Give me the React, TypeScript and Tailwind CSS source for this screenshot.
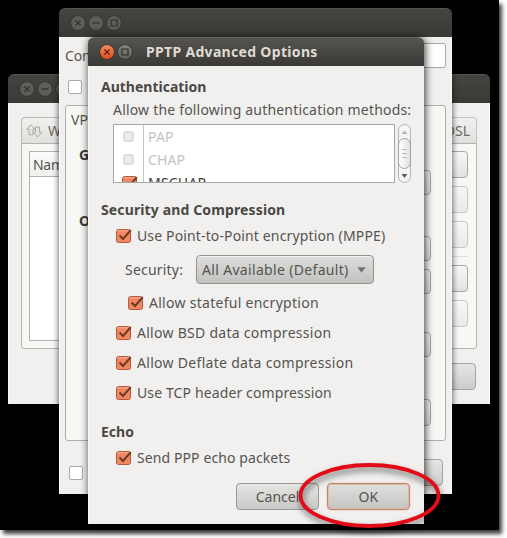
import type { ReactNode } from "react";

function WindowButton({ kind, active = false }: { kind: "close" | "min" | "max"; active?: boolean }) {
  return (
    <svg width="16" height="16" viewBox="0 0 16 16" className="shrink-0">
      <defs>
        <linearGradient id="orb-on" x1="0" y1="0" x2="0" y2="1">
          <stop offset="0" stopColor="#f58a63" />
          <stop offset="1" stopColor="#dd4b1c" />
        </linearGradient>
        <linearGradient id="orb-off" x1="0" y1="0" x2="0" y2="1">
          <stop offset="0" stopColor="#85847d" />
          <stop offset="1" stopColor="#605f5a" />
        </linearGradient>
      </defs>
      <circle
        cx="8"
        cy="8"
        r="7.4"
        fill={kind === "close" && active ? "url(#orb-on)" : active ? "url(#orb-off)" : "#5e5d58"}
        stroke="#2f2e2a"
        strokeWidth="0.8"
      />
      <g fill="none" stroke={kind === "close" && active ? "#4a1c0a" : "#30302c"} strokeWidth="1.2">
        {kind === "close" && <path d="M5.3 5.3l5.4 5.4M10.7 5.3l-5.4 5.4" />}
        {kind === "min" && <path d="M4.5 8h7" />}
        {kind === "max" && <path d="M5 5h6v6H5z" />}
      </g>
    </svg>
  );
}

function TitleBar({ active = false, children }: { active?: boolean; children?: ReactNode }) {
  return (
    <div
      className={`flex h-[29px] shrink-0 items-center gap-[2px] rounded-t-[6px] border-t bg-linear-to-b to-[#3a3935] pl-[11px] ${
        active ? "border-[#65645f] from-[#55544f]" : "border-[#55544f] from-[#454440]"
      }`}
    >
      <WindowButton kind="close" active={active} />
      {!active && <WindowButton kind="min" />}
      <WindowButton kind="max" active={active} />
      {children}
    </div>
  );
}

function Tick({ on = true }: { on?: boolean }) {
  return on ? (
    <svg width="16" height="16" viewBox="0 0 16 16" className="shrink-0">
      <rect x="0.5" y="1.5" width="14" height="13" rx="2" fill="#f08763" stroke="#b35b3e" />
      <path d="M1.5 2.8h12" stroke="#f8ae94" />
      <path d="M3.5 7.5L7 11L14.8 2.2" fill="none" stroke="#6b3722" strokeWidth="1.9" />
    </svg>
  ) : (
    <div className="size-[14px] shrink-0 rounded-[2px] border border-[#aaa9a6] bg-white" />
  );
}

function CheckRow({ children, indent = false }: { children: ReactNode; indent?: boolean }) {
  return (
    <div className={`flex h-[30px] items-center gap-[5px] whitespace-nowrap ${indent ? "pl-[40px]" : "pl-[28px]"}`}>
      <Tick />
      {children}
    </div>
  );
}

function SideButton({ className }: { className: string }) {
  return <div className={`rounded-[4px] border border-[#a9a8a5] bg-linear-to-b from-[#f8f8f7] to-[#e2e2e1] ${className}`} />;
}

function ConnectionsWindow() {
  return (
    <div className="absolute left-[8px] top-[74px] flex h-[330px] w-[482px] flex-col">
      <TitleBar />
      <div className="flex flex-1 flex-col border-x border-[#fafafa] bg-[#f1f0ef] pt-[14px]">
        <div className="mx-[12px] flex h-[26px] justify-between">
          <div className="flex w-[90px] items-center gap-[5px] rounded-t-[4px] border border-b-0 border-[#bbb9b5] bg-linear-to-b from-[#f1f0ef] to-[#e1e0de] pl-[4px] text-[#6b6a66]">
            <svg width="17" height="14" viewBox="0 0 17 14" fill="#e5e4df" stroke="#aaa9a1" strokeWidth="1">
              <path d="M5 .8L.8 5.2H3v5.6h4V5.2h2.2z" />
              <path d="M9.5 3h4v5.3h2.2L11.5 13L7.3 8.3h2.2z" />
            </svg>
            <span>Wired</span>
          </div>
          <div className="flex w-[65px] items-center justify-end rounded-tr-[4px] border border-b-0 border-[#c5c3bf] bg-linear-to-b from-[#f1f0ef] to-[#e1e0de] pr-[6px] text-[#6b6a66]">
            DSL
          </div>
        </div>
        <div className="mx-[12px] flex h-[206px] justify-between rounded-b-[3px] border border-[#b5b3af] bg-[#f7f7f6] pb-[7px] pl-[7px] pr-[8px] pt-[7px]">
          <div className="w-[320px] border border-[#b4b2ae] bg-white">
            <div className="h-[25px] border-b border-[#b4b2ae] bg-linear-to-b from-[#fbfbfa] to-[#f0f0ef] pl-[3px] leading-[26px] tracking-[-0.3px]">Name</div>
          </div>
          <div className="flex w-[90px] flex-col gap-[8px]">
            <SideButton className="h-[27px]" />
            <SideButton className="h-[27px] opacity-60" />
            <SideButton className="h-[27px] opacity-60" />
            <div className="h-px bg-[#dddcda]" />
            <SideButton className="h-[27px]" />
            <SideButton className="h-[27px] opacity-60" />
          </div>
        </div>
        <div className="mr-[13px] mt-[14px] flex justify-end">
          <div className="flex h-[27px] w-[85px] items-center rounded-[4px] border border-[#a3a2a0] bg-linear-to-b from-[#e6e6e5] to-[#cccccb] pl-[24px]">Close</div>
        </div>
      </div>
    </div>
  );
}

function EditWindow() {
  return (
    <div className="absolute left-[59px] top-[8px] flex h-[486px] w-[393px] flex-col rounded-t-[6px] shadow-[0_0_6px_rgba(0,0,0,0.7)]">
      <TitleBar />
      <div className="flex flex-1 flex-col border-x border-[#fafafa] bg-[#f1f0ef] px-[5px] pt-[6px]">
        <div className="flex h-[25px] items-center">
          <span className="w-[140px] pt-px tracking-[-0.1px]">Connection name:</span>
          <div className="h-[25px] flex-1 rounded-[3px] border border-[#a9a8a5] bg-white" />
        </div>
        <div className="mt-[12px] pl-[3px]">
          <Tick on={false} />
        </div>
        <div className="mt-[11px] flex h-[336px] flex-col rounded-[3px] border border-[#b1afac] bg-[#f7f7f6] pl-[5px] pr-[14px]">
          <div className="flex h-[26px] items-center pt-[2px]">VPN</div>
          <div className="flex h-[46px] items-center pl-[8px] font-bold text-[#3c3b37]">General</div>
          <div className="flex h-[86px] items-center pl-[8px] font-bold text-[#3c3b37]">Optional</div>
          <div className="-mt-[94px] ml-auto flex w-[60px] flex-col">
            <SideButton className="h-[25px]" />
            <SideButton className="mt-[41px] h-[25px]" />
            <SideButton className="mt-[8px] h-[25px]" />
            <SideButton className="mt-[38px] h-[25px]" />
            <SideButton className="mt-[42px] h-[27px]" />
          </div>
        </div>
        <div className="mt-[18px] flex items-center justify-between pl-[4px] pr-[3px]">
          <Tick on={false} />
          <div className="h-[27px] w-[83px] rounded-[4px] border border-[#a3a2a0] bg-linear-to-b from-[#e6e6e5] to-[#cccccb]" />
        </div>
      </div>
    </div>
  );
}

function MethodRow({ children }: { children: ReactNode }) {
  return (
    <div className="flex h-[23px] shrink-0 items-center text-[#c4c3c1]">
      <div className="flex w-[29px] justify-center">
        <div className="size-[11px] rounded-[3px] border-2 border-[#dddcda] bg-[#ececeb]" />
      </div>
      {children}
    </div>
  );
}

function MethodList() {
  return (
    <div className="ml-[25px] flex h-[59px] gap-[3px]">
      <div className="flex w-[282px] flex-col overflow-hidden border border-[#a9a7a3] bg-[linear-gradient(to_right,transparent_29px,#c8c6c3_29px,#c8c6c3_30px,transparent_30px)] bg-white">
        <MethodRow>
          <span className="pl-[5px] tracking-[0.2px]">PAP</span>
        </MethodRow>
        <MethodRow>
          <span className="pl-[5px] tracking-[0.1px]">CHAP</span>
        </MethodRow>
        <div className="flex h-[23px] shrink-0 items-center text-[#3c3b37]">
          <div className="flex w-[29px] justify-center pl-[3px]">
            <Tick />
          </div>
          <span className="pl-[5px] tracking-[0.2px]">MSCHAP</span>
        </div>
      </div>
      <div className="flex w-[13px] flex-col items-center justify-between rounded-[7px] border border-[#b6b4b0] bg-[#f6f5f4]">
        <svg width="7" height="12" viewBox="0 0 7 12"><path d="M.8 9L3.5 5.5L6.2 9z" fill="#b2b1ae" /></svg>
        <div className="flex h-[31px] w-[13px] flex-col items-center justify-center gap-[3px] rounded-[7px] border border-[#a3a19d] bg-linear-to-r from-white to-[#e3e2e0]">
          <div className="h-px w-[5px] bg-[#bbb]" />
          <div className="h-px w-[5px] bg-[#bbb]" />
          <div className="h-px w-[5px] bg-[#bbb]" />
        </div>
        <svg width="7" height="13" viewBox="0 0 7 13"><path d="M.5 5L3.5 9L6.5 5z" fill="#5e5d5a" /></svg>
      </div>
    </div>
  );
}

function Heading({ children, className }: { children: ReactNode; className: string }) {
  return <div className={`flex items-center pl-[13px] font-bold text-[#4a4945] ${className}`}>{children}</div>;
}

function PptpDialog() {
  return (
    <div className="absolute left-[88px] top-[37px] flex h-[487px] w-[336px] flex-col rounded-t-[6px] shadow-[1px_1px_9px_rgba(0,0,0,0.8)]">
      <TitleBar active>
        <span className="whitespace-nowrap pl-[11px] font-bold tracking-[0.32px] text-[#dfdbd2]">PPTP Advanced Options</span>
      </TitleBar>
      <div className="flex flex-1 flex-col border-l border-[#fafafa] bg-[#f1f0ef] pt-[9px]">
        <div className="-ml-px flex flex-col">
          <Heading className="h-[24px]">Authentication</Heading>
          <div className="flex h-[25px] items-center pb-[3px] pl-[25px]">
            <span className="whitespace-nowrap tracking-[0.19px]">Allow the following authentication methods:</span>
          </div>
          <MethodList />
          <Heading className="mt-[16px] h-[22px] tracking-[0.13px]">Security and Compression</Heading>
          <CheckRow><span className="tracking-[0.14px]">Use Point-to-Point encryption (MPPE)</span></CheckRow>
          <div className="flex h-[37px] items-center pl-[37px]">
            <span className="w-[71px] tracking-[0.2px]">Security:</span>
            <div className="flex h-[29px] w-[178px] items-center justify-between rounded-[4px] border border-[#93928f] bg-linear-to-b from-[#dededd] to-[#c2c2c1] pl-[5px] pr-[7px] shadow-[inset_0_1px_0_#f1f1f1]">
              <span className="whitespace-nowrap tracking-[0.33px]">All Available (Default)</span>
              <svg width="9" height="6" viewBox="0 0 9 6"><path d="M.3.3h8.4L4.5 5.7z" fill="#747371" /></svg>
            </div>
          </div>
          <CheckRow indent><span className="tracking-[0.28px]">Allow stateful encryption</span></CheckRow>
          <CheckRow><span className="tracking-[0.28px]">Allow BSD data compression</span></CheckRow>
          <CheckRow><span className="tracking-[0.3px]">Allow Deflate data compression</span></CheckRow>
          <CheckRow><span className="tracking-[0.12px]">Use TCP header compression</span></CheckRow>
          <Heading className="mt-[13px] h-[22px]">Echo</Heading>
          <CheckRow><span className="tracking-[0.1px]">Send PPP echo packets</span></CheckRow>
          <div className="mt-[10px] flex justify-end gap-[8px] pr-[14px]">
            <div className="flex h-[27px] w-[83px] items-center justify-center rounded-[4px] border border-[#9b9a98] bg-linear-to-b from-[#e5e5e4] to-[#c9c9c8]">Cancel</div>
            <div className="flex h-[27px] w-[83px] items-center justify-center rounded-[4px] border border-[#b98872] bg-linear-to-b from-[#e0e0df] to-[#c4c4c3] pt-px tracking-[0.3px] shadow-[inset_0_0_0_1px_#dfb9a8,0_0_0_1px_#f4ddd3]">OK</div>
          </div>
        </div>
      </div>
    </div>
  );
}

export default function App() {
  return (
    <div className="relative h-[538px] w-[507px] overflow-hidden bg-white font-['Noto_Sans','Open_Sans',sans-serif] text-[14px] leading-[20px] text-[#55544f]">
      <div className="h-[530px] w-[499px] bg-black shadow-[3px_4px_4px_rgba(0,0,0,0.75)]" />
      <ConnectionsWindow />
      <EditWindow />
      <PptpDialog />
      <svg className="absolute left-[290px] top-[454px] drop-shadow-[1px_4px_3px_rgba(0,0,0,0.55)]" width="160" height="80" viewBox="0 0 160 80">
        <ellipse cx="79.5" cy="41.5" rx="69" ry="30.5" fill="none" stroke="#e30b17" strokeWidth="3.8" />
      </svg>
    </div>
  );
}
